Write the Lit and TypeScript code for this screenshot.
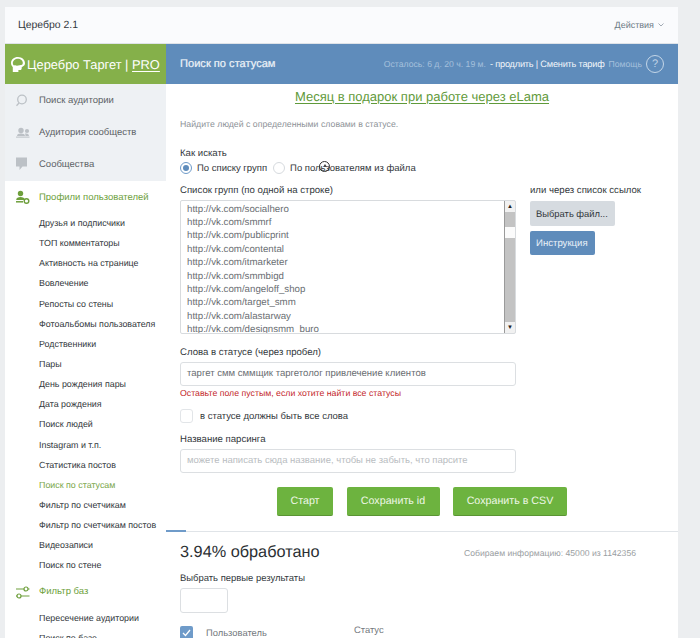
import { LitElement, html, css, svg } from "lit";
import { customElement } from "lit/decorators.js";

const profile = ["Друзья и подписчики","ТОП комментаторы","Активность на странице","Вовлечение","Репосты со стены","Фотоальбомы пользователя","Родственники","Пары","День рождения пары","Дата рождения","Поиск людей","Instagram и т.п.","Статистика постов","Поиск по статусам","Фильтр по счетчикам","Фильтр по счетчикам постов","Видеозаписи","Поиск по стене"];
const urls = ["socialhero","smmrf","publicprint","contental","itmarketer","smmbigd","angeloff_shop","target_smm","alastarway","designsmm_buro"];

const iSearch = svg`<svg width="18" height="16" viewBox="0 0 18 16" fill="none" stroke="#bcc1c6" stroke-width="1.300"><circle cx="7" cy="7.500" r="4.300"/><path d="M4 11l-2.500 2.800"/></svg>`;
const iPeople = svg`<svg width="18" height="16" viewBox="0 0 18 16" fill="#bcc1c6"><circle cx="6" cy="6.500" r="2.700"/><circle cx="12" cy="7" r="2.100"/><path d="M2 12c0-2 1.800-2.600 4-2.600s4 .6 4 2.600zM10.500 12c0-1 -.2-1.800-.6-2.400 1.800-.5 4.100.1 4.100 2.400z"/><rect x="1" y="12.600" width="13.500" height="1"/></svg>`;
const iChat = svg`<svg width="18" height="16" viewBox="0 0 18 16" fill="#bcc1c6"><path d="M1 1.500h11v9H7.500L4.500 14v-3.500H1z"/></svg>`;
const iProfile = svg`<svg width="18" height="16" viewBox="0 0 18 16" fill="none"><circle cx="5.500" cy="4.500" r="2.700" fill="#6e9f3c"/><path d="M1.200 11c0-2.200 2-3 4.300-3s4.300.8 4.300 3z" fill="#6e9f3c"/><path d="M1 12.800h7" stroke="#6e9f3c" stroke-width="1.500"/><circle cx="11.500" cy="12" r="2.300" stroke="#6e9f3c" stroke-width="1.400"/></svg>`;
const iFilter = svg`<svg width="18" height="16" viewBox="0 0 18 16" fill="none" stroke="#6e9f3c" stroke-width="1.200"><path d="M1 5h8M13 5h1.500M1 12h1M6 12h8.500"/><circle cx="11" cy="5" r="2"/><circle cx="4" cy="12" r="2"/></svg>`;
const iBrain = svg`<svg width="14" height="15" viewBox="0 0 14 15"><path fill="#fff" d="M7 0C3 0 0 2.600 0 6c0 1.800.7 3.100 1.800 4.100V15h5.600v-2h1.800c.9 0 1.500-.6 1.500-1.500v-1.300C13 9.200 14 8 14 6.300 14 2.800 11 0 7 0z"/><path fill="#85b04a" d="M7 1.800C4.100 1.800 1.800 3.700 1.800 6.200c0 1 .4 1.800 1.100 2.400 1.200-.7 2.100-.4 3 .2 1.500-.7 3.900-.6 5.200-1.100.4-.5.700-1 .7-1.700 0-2.400-2.200-4.200-4.800-4.200z"/></svg>`;

@customElement("app-root")
export class AppRoot extends LitElement {
  static styles = css`
    :host { display: block; height: 638px; overflow: hidden; background: #eceef0; font-family: "Liberation Sans", Arial, sans-serif; color: #2b2f33; position: relative; text-rendering: geometricPrecision; }
    .card { margin: 7px 22px 0 5px; background: #fff; height: 631px; overflow: hidden; }
    .top { height: 37px; box-sizing: border-box; background: #fafbfd; border-bottom: 1px solid #dfe3e8; display: flex; align-items: center; justify-content: space-between; padding: 0 14px 0 13px; }
    .top .title { color: #33383c; font-size: 10.450px; }
    .actions { color: #6c7a86; font-size: 9px; display: flex; align-items: center; gap: 4px; }
    .bar { display: flex; height: 40px; }
    .brand { width: 161px; background: #85b04a; color: #fff; display: flex; align-items: center; gap: 2px; padding-left: 6px; box-sizing: border-box; font-size: 12.850px; white-space: nowrap; }
    .brand svg { flex: none; }
    .brand u { text-underline-offset: 2px; }
    .blue { flex: 1; background: #5f8cbb; color: #fff; display: flex; align-items: center; justify-content: space-between; padding: 0 14px; }
    .blue b { font-weight: normal; font-size: 11.100px; color: #eef3f8; -webkit-text-stroke: .2px #eef3f8; }
    .status { display: flex; align-items: center; font-size: 8.670px; color: #a5c0dc; white-space: nowrap; }
    .status span.w { color: #f2f6fa; font-size: 9.200px; letter-spacing: -.2px; margin: 0 4px; }
    .q { width: 18px; height: 18px; box-sizing: border-box; border: 1.300px solid #c4d6e8; border-radius: 50%; color: #c4d6e8; display: flex; align-items: center; justify-content: center; font-size: 11px; margin-left: 4px; }
    .cols { display: flex; }
    .side { width: 161px; flex: none; }
    .gray { background: #eef1f4; height: 97px; }
    .group { display: flex; align-items: center; height: 32px; padding-left: 10px; font-size: 9.500px; color: #5d6266; gap: 6px; }
    .group.green { color: #6e9f3c; }
    .group svg { flex: none; }
    .sub { padding-left: 34px; font-size: 8.900px; color: #33383c; height: 20.150px; line-height: 20.150px; white-space: nowrap; }
    .sub.on { color: #7aa64a; }
    .main { flex: 1; position: relative; min-width: 0; }
    .form { padding: 0 14px; height: 447px; box-sizing: border-box; }
    .promo { text-align: center; font-size: 13px; color: #5f9a3a; text-decoration: underline; padding-top: 5px; height: 24px; box-sizing: border-box; text-underline-offset: 2px; line-height: 16px; }
    .hint { color: #8d9297; font-size: 8.760px; margin-top: 10px; line-height: 12px; }
    .lbl { font-size: 9.600px; line-height: 12px; color: #33383c; }
    .how { margin-top: 18px; }
    .radios { display: flex; align-items: center; margin-top: 1px; font-size: 9.500px; height: 14px; color: #33383c; }
    .radio { width: 10px; height: 10px; border-radius: 50%; border: 1px solid #d6dade; background: #fff; flex: none; margin-right: 5px; }
    .radio.on { border-color: #6f9bc9; position: relative; }
    .radio.on::after { content: ""; position: absolute; inset: 2px; border-radius: 50%; background: #5f8cbb; }
    .r2 { margin-left: 6px; }
    .split { display: flex; margin-top: 10px; gap: 14px; }
    .left { width: 336px; flex: none; }
    .list { height: 134px; margin-top: 3px; border: 1px solid #d8dbde; border-radius: 2px; box-sizing: border-box; display: flex; overflow: hidden; background: #fff; }
    .lines { flex: 1; padding: 1.500px 6px 0; font-size: 9.700px; line-height: 13.420px; color: #6a6e72; overflow: hidden; white-space: nowrap; }
    .sb { width: 10px; border-left: 1px solid #9a9a9a; display: flex; flex-direction: column; background: #c3c3c3; }
    .sb i { display: flex; align-items: center; justify-content: center; height: 11px; background: #f1f1f1; font-style: normal; font-size: 6px; color: #222; flex: none; }
    .sb .track { flex: 1; }
    .sb .track.long { flex: 5.600; }
    .sb .thumb { height: 11px; background: #fbfbfb; flex: none; }
    .words { margin-top: 13px; }
    .input { height: 24px; border: 1px solid #dcdfe2; border-radius: 3px; box-sizing: border-box; margin-top: 3px; padding: 0 6px; font-size: 9.550px; line-height: 22px; color: #6a6e72; white-space: nowrap; }
    .input.ph { color: #b9bdc1; font-size: 9.500px; }
    .err { color: #c4272b; font-size: 8.750px; line-height: 12px; margin-top: 1px; }
    .chk { display: flex; align-items: center; margin-top: 10px; font-size: 9.470px; height: 14px; gap: 7px; color: #33383c; }
    .box { width: 13px; height: 14px; border: 1px solid #e2e5e8; border-radius: 3px; box-sizing: border-box; background: #fff; }
    .name { margin-top: 11px; }
    .btn-g { border-radius: 2px; display: flex; align-items: center; padding-left: 6px; box-sizing: border-box; }
    .gray-b { width: 85px; height: 25px; background: #d6dbe0; color: #33383c; margin-top: 4px; font-size: 9.400px; }
    .blue-b { width: 65px; height: 24px; background: #5f8cbb; color: #eaf1f8; margin-top: 5px; font-size: 9.600px; }
    .acts { display: flex; gap: 13.500px; margin-top: 14px; padding-left: 97px; }
    .go { height: 29px; background: #6db33f; border-bottom: 1px solid #5a9433; border-radius: 2px; color: #eef7e6; font-size: 10.700px; display: flex; align-items: center; justify-content: center; box-sizing: border-box; }
    .w1 { width: 56px; } .w2 { width: 93px; } .w3 { width: 114px; }
    .progress { height: 1px; background: #e0e4e8; position: relative; }
    .progress::before { content: ""; position: absolute; left: 0; top: -1px; width: 20px; height: 2px; background: #6f9bc9; }
    .res { padding: 0 14px; }
    .rh { display: flex; justify-content: space-between; align-items: center; height: 41px; }
    .rh .pc { font-size: 16.300px; color: #2b2f33; }
    .rh .info { font-size: 8.650px; color: #9a9ea2; padding-right: 28px; }
    .first { font-size: 9.450px; }
    .small { width: 48px; height: 25px; border: 1px solid #dcdfe2; border-radius: 3px; box-sizing: border-box; margin-top: 3px; }
    .table { display: flex; margin-top: 13px; font-size: 9.400px; color: #73787d; }
    .cb { width: 13px; height: 14px; background: #6f9bc9; border-radius: 2px; display: flex; align-items: center; justify-content: center; flex: none; }
    .th1 { margin-left: 13px; width: 148px; padding-top: 1px; }
    .th2 { margin-top: -2px; }
    .cursor { position: absolute; left: 153px; top: 77px; width: 11px; height: 11px; border: 1px solid #333; border-radius: 50%; box-sizing: border-box; display: flex; align-items: center; justify-content: center; }
    .cursor::after { content: ""; border: 2.500px solid transparent; border-bottom: 3px solid #444; margin-top: -4px; }
  `;

  render() {
    return html`<div class="card">
      <div class="top"><span class="title">Церебро 2.1</span><span class="actions">Действия
        <svg width="6" height="4" viewBox="0 0 6 4" fill="none" stroke="#8a96a1" stroke-width=".8"><path d="M.5 .5L3 3l2.500-2.500"/></svg></span></div>
      <div class="bar">
        <div class="brand">${iBrain}<span>Церебро Таргет | <u>PRO</u></span></div>
        <div class="blue"><b>Поиск по статусам</b>
          <div class="status">Осталось: 6 д. 20 ч. 19 м.<span class="w">- продлить | Сменить тариф</span>Помощь<span class="q">?</span></div>
        </div>
      </div>
      <div class="cols">
        <div class="side">
          <div class="gray">
            <div class="group">${iSearch}Поиск аудитории</div>
            <div class="group">${iPeople}Аудитория сообществ</div>
            <div class="group">${iChat}Сообщества</div>
          </div>
          <div class="group green">${iProfile}Профили пользователей</div>
          <div>${profile.map((p) => html`<div class="sub ${p === "Поиск по статусам" ? "on" : ""}">${p}</div>`)}</div>
          <div class="group green">${iFilter}Фильтр баз</div>
          <div class="sub">Пересечение аудитории</div>
          <div class="sub">Поиск по базе</div>
        </div>
        <div class="main">
          <div class="form">
            <div class="promo">Месяц в подарок при работе через eLama</div>
            <div class="hint">Найдите людей с определенными словами в статусе.</div>
            <div class="lbl how">Как искать</div>
            <div class="radios"><span class="radio on"></span>По списку групп<span class="radio r2"></span>По пользователям из файла</div>
            <div class="split">
              <div class="left">
                <div class="lbl">Список групп (по одной на строке)</div>
                <div class="list">
                  <div class="lines">${urls.map((u) => html`<div>http://vk.com/${u}</div>`)}</div>
                  <div class="sb"><i>▲</i><div class="track"></div><div class="thumb"></div><div class="track long"></div><i>▼</i></div>
                </div>
                <div class="lbl words">Слова в статусе (через пробел)</div>
                <div class="input">таргет смм сммщик таргетолог привлечение клиентов</div>
                <div class="err">Оставьте поле пустым, если хотите найти все статусы</div>
                <div class="chk"><span class="box"></span>в статусе должны быть все слова</div>
                <div class="lbl name">Название парсинга</div>
                <div class="input ph">можете написать сюда название, чтобы не забыть, что парсите</div>
              </div>
              <div class="right">
                <div class="lbl">или через список ссылок</div>
                <div class="btn-g gray-b">Выбрать файл...</div>
                <div class="btn-g blue-b">Инструкция</div>
              </div>
            </div>
            <div class="acts">
              <div class="go w1">Старт</div>
              <div class="go w2">Сохранить id</div>
              <div class="go w3">Сохранить в CSV</div>
            </div>
          </div>
          <div class="progress"></div>
          <div class="res">
            <div class="rh"><span class="pc">3.94% обработано</span><span class="info">Собираем информацию: 45000 из 1142356</span></div>
            <div class="lbl first">Выбрать первые результаты</div>
            <div class="small"></div>
            <div class="table">
              <span class="cb"><svg width="9" height="8" viewBox="0 0 9 8" fill="none" stroke="#fff" stroke-width="1.300"><path d="M1 4l2.500 2.500L8 1"/></svg></span>
              <span class="th1">Пользователь</span><span class="th2">Статус</span>
            </div>
          </div>
          <div class="cursor"></div>
        </div>
      </div>
    </div>`;
  }
}
